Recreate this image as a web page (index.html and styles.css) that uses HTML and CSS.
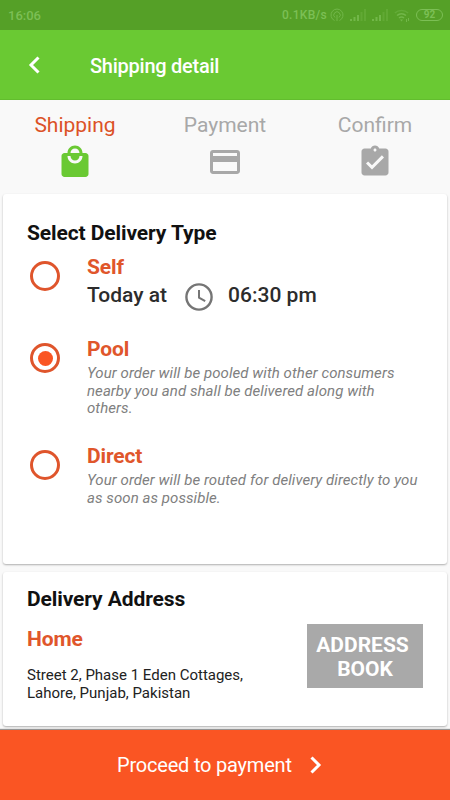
FILE: index.html
```html
<!DOCTYPE html>
<html lang="en">
<head>
<meta charset="UTF-8">
<meta name="viewport" content="width=device-width, initial-scale=1.0">
<title>Shipping detail</title>
<link rel="stylesheet" href="styles.css">
</head>
<body>
    <div class="status-bar">
        <span class="clock">16:06</span>
        <div class="status-icons">
            <span class="speed">0.1KB/s</span>
            <svg class="hotspot" width="14" height="14" viewBox="0 0 14 14" fill="none" stroke="currentColor">
                <path d="M4.500 12.500a6 6 0 1 1 5 0M5 9.500a3.200 3.200 0 1 1 4 0M7 7v6"/>
            </svg>
            <svg class="signal" width="17" height="12" viewBox="0 0 17 12" fill="currentColor">
                <path d="M0 10h2v2H0zM3.500 8h2v4h-2zM7 6h2v6H7z"/>
                <path opacity=".4" d="M10.500 3h2v9h-2zM14 0h2v12h-2z"/>
            </svg>
            <svg class="signal" width="17" height="12" viewBox="0 0 17 12" fill="currentColor">
                <path d="M0 10h2v2H0zM3.500 8h2v4h-2zM7 6h2v6H7z"/>
                <path opacity=".4" d="M10.500 3h2v9h-2zM14 0h2v12h-2z"/>
            </svg>
            <svg class="wifi" width="16" height="13" viewBox="0 0 16 13" fill="none" stroke="currentColor">
                <path opacity=".5" stroke-width="1.500" d="M.8 4a10 10 0 0 1 13.400 0"/>
                <path stroke-width="1.600" d="M3 6.500a7 7 0 0 1 9 0M5 9a4 4 0 0 1 5 0"/>
                <path fill="currentColor" stroke="none" d="M6 10.500h3L7.500 12.500zM12 10h1v3h-1zM14 9h1v3h-1z"/>
            </svg>
            <span class="battery">92</span>
        </div>
    </div>

    <header class="toolbar">
        <svg class="back" width="12" height="18" viewBox="0 0 12 18" fill="none" stroke="#fff" stroke-width="3">
            <path d="M10.500 1.500L3 9l7.500 7.500"/>
        </svg>
        <h1>Shipping detail</h1>
    </header>

    <nav class="steps">
        <div class="step active">
            <span>Shipping</span>
            <svg width="36" height="36" viewBox="0 0 24 24">
                <path d="M19 6h-2c0-2.760-2.240-5-5-5S7 3.240 7 6H5c-1.100 0-1.990.9-1.990 2L3 20c0 1.100.9 2 2 2h14c1.100 0 2-.9 2-2V8c0-1.100-.9-2-2-2zm-7-3c1.660 0 3 1.340 3 3H9c0-1.660 1.340-3 3-3zm0 10c-2.760 0-5-2.240-5-5h2c0 1.660 1.340 3 3 3s3-1.340 3-3h2c0 2.760-2.240 5-5 5z"/>
            </svg>
        </div>
        <div class="step">
            <span>Payment</span>
            <svg width="36" height="36" viewBox="0 0 24 24">
                <path d="M20 4H4c-1.110 0-1.990.89-1.990 2L2 18c0 1.110.89 2 2 2h16c1.110 0 2-.89 2-2V6c0-1.110-.89-2-2-2zm0 14H4v-6h16v6zm0-10H4V6h16v2z"/>
            </svg>
        </div>
        <div class="step">
            <span>Confirm</span>
            <svg width="36" height="36" viewBox="0 0 24 24">
                <path d="M19 3h-4.180C14.400 1.840 13.300 1 12 1c-1.300 0-2.400.84-2.820 2H5c-1.100 0-2 .9-2 2v14c0 1.100.9 2 2 2h14c1.100 0 2-.9 2-2V5c0-1.100-.9-2-2-2zm-7 0c.55 0 1 .45 1 1s-.45 1-1 1-1-.45-1-1 .45-1 1-1zm-2 14l-4-4 1.410-1.410L10 14.170l6.590-6.590L18 9l-8 8z"/>
            </svg>
        </div>
    </nav>

    <main>
        <section class="card delivery-type">
            <h2>Select Delivery Type</h2>
            <div class="option self">
                <span class="radio"></span>
                <div class="option-text">
                    <h3>Self</h3>
                    <div class="time">
                        <span class="today">Today at</span>
                        <svg width="28" height="28" viewBox="0 0 28 28" fill="none" stroke="#757575">
                            <circle cx="14" cy="14" r="12.600" stroke-width="2.400"/>
                            <path stroke-width="2" d="M14 7v7.700l6.200 3.500"/>
                        </svg>
                        <span class="hour">06:30 pm</span>
                    </div>
                </div>
            </div>
            <div class="option pool">
                <span class="radio checked"></span>
                <div class="option-text">
                    <h3>Pool</h3>
                    <p>Your order will be pooled with other consumers<br>nearby you and shall be delivered along with<br>others.</p>
                </div>
            </div>
            <div class="option direct">
                <span class="radio"></span>
                <div class="option-text">
                    <h3>Direct</h3>
                    <p>Your order will be routed for delivery directly to you<br>as soon as possible.</p>
                </div>
            </div>
        </section>

        <section class="card address">
            <div class="address-info">
                <h2>Delivery Address</h2>
                <h3>Home</h3>
                <p>Street 2, Phase 1 Eden Cottages,<br>Lahore, Punjab, Pakistan</p>
            </div>
            <button class="address-book">ADDRESS<br>BOOK</button>
        </section>
    </main>

    <button class="proceed">
        <span>Proceed to payment</span>
        <svg width="12" height="18" viewBox="0 0 12 18" fill="none" stroke="#fff" stroke-width="3">
            <path d="M1.500 1.500L9 9l-7.500 7.500"/>
        </svg>
    </button>
</body>
</html>
```
FILE: styles.css
```css
* {
    box-sizing: border-box;
}

body {
    margin: 0;
    height: 800px;
    display: flex;
    flex-direction: column;
    overflow: hidden;
    background-color: #f9f9f9;
    font-family: Roboto, sans-serif;
}

h1, h2, h3, p {
    margin: 0;
    white-space: nowrap;
}

button {
    border: none;
    font-family: inherit;
}

/* status bar */
.status-bar {
    display: flex;
    justify-content: space-between;
    align-items: center;
    height: 30px;
    padding: 0 7px 0 8px;
    background-color: #55a027;
    color: #7cbf55;
    font-size: 13px;
    font-weight: 500;
}

.status-icons {
    display: flex;
    align-items: center;
}

.status-icons svg {
    opacity: 0.75;
}

.speed {
    font-size: 12px;
    letter-spacing: 0.3px;
    margin-right: 3px;
}

.hotspot {
    margin-right: 6px;
}

.signal {
    margin-right: 5px;
}

.wifi {
    margin-right: 6px;
}

.battery {
    width: 27px;
    height: 12px;
    border: 1px solid currentColor;
    border-radius: 6px;
    font-size: 10px;
    font-weight: 700;
    line-height: 10px;
    text-align: center;
}

/* toolbar */
.toolbar {
    display: flex;
    align-items: center;
    height: 70px;
    padding: 0 28px;
    background-color: #6ac933;
    border-bottom: 1px solid #62bd2e;
    color: #fff;
}

.toolbar h1 {
    margin-left: 50px;
    padding-top: 2px;
    font-size: 20px;
    font-weight: 500;
    letter-spacing: -0.25px;
}

/* steps */
.steps {
    display: grid;
    grid-template-columns: repeat(3, 1fr);
    height: 94px;
    padding-top: 13px;
}

.step {
    display: flex;
    flex-direction: column;
    align-items: center;
    color: #a8a8a8;
    font-size: 21px;
    line-height: 25px;
}

.step svg {
    margin-top: 6px;
    fill: #a8a8a8;
}

.step.active {
    color: #dc5227;
}

.step.active svg {
    fill: #6ac933;
}

/* cards */
main {
    display: flex;
    flex-direction: column;
    gap: 8px;
    height: 536px;
    padding: 0 3px;
}

.card {
    background-color: #fff;
    border-radius: 3px;
    box-shadow: 0 1px 2px rgba(0, 0, 0, 0.3);
}

h2 {
    color: #111;
    font-size: 21px;
    font-weight: 700;
    line-height: 25px;
    letter-spacing: -0.1px;
}

h3 {
    color: #e0562b;
    font-size: 21px;
    font-weight: 700;
    line-height: 25px;
    letter-spacing: -0.15px;
}

.delivery-type {
    height: 370px;
    padding: 27px 24px 0;
}

.option {
    display: flex;
    align-items: flex-start;
    gap: 27px;
    padding-left: 3px;
}

.self {
    height: 82px;
    margin-top: 9px;
}

.pool {
    height: 107px;
}

.radio {
    display: flex;
    flex: none;
    width: 30px;
    height: 30px;
    margin-top: 6px;
    border: 3px solid #df552c;
    border-radius: 50%;
}

.radio.checked::after {
    content: "";
    width: 15px;
    height: 15px;
    margin: auto;
    border-radius: 50%;
    background-color: #fa5523;
}

.option-text p {
    margin-top: 3px;
    color: #808080;
    font-size: 15px;
    font-style: italic;
    line-height: 17.600px;
    letter-spacing: 0.07px;
}

.time {
    display: flex;
    align-items: center;
    height: 30px;
    color: #2c2c2c;
    font-size: 21px;
    font-weight: 500;
}

.time svg {
    margin: 3px 15px 0 18px;
}

.address {
    display: flex;
    justify-content: space-between;
    height: 154px;
    padding: 15px 24px 0;
}

.address h3 {
    margin-top: 15px;
}

.address p {
    margin-top: 15px;
    color: #222;
    font-size: 15px;
    line-height: 17.600px;
}

.address-book {
    width: 116px;
    height: 64px;
    margin-top: 37px;
    padding: 2px 0 0;
    background-color: #a9a9a9;
    color: #fff;
    font-size: 21px;
    font-weight: 700;
    line-height: 24px;
    text-indent: -5px;
}

/* bottom button */
.proceed {
    display: flex;
    align-items: center;
    height: 70px;
    padding: 0 0 0 117px;
    background-color: #fa5523;
    color: #fff;
    font-size: 20px;
    letter-spacing: -0.2px;
    box-shadow: 0 -1px 1px rgba(0, 0, 0, 0.4);
}

.proceed svg {
    margin-left: 18px;
}
```
